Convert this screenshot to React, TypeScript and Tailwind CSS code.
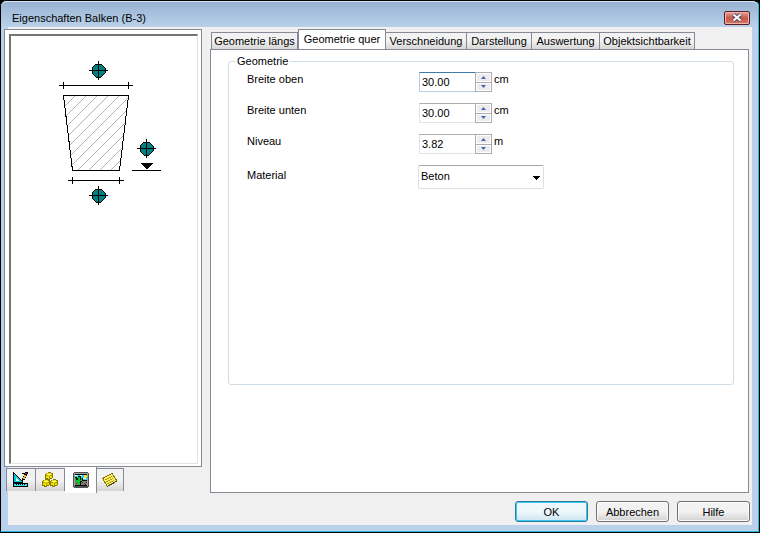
import { useState } from "react";
import clsx from "clsx";

const tabs = [
  { name: "Geometrie längs", width: "w-[87px]" },
  { name: "Geometrie quer", width: "w-[88px]" },
  { name: "Verschneidung", width: "w-[81px]" },
  { name: "Darstellung", width: "w-[65px]" },
  { name: "Auswertung", width: "w-[68px]" },
  { name: "Objektsichtbarkeit", width: "w-[95px]" },
];

const hatchLines = [171, 182, 193, 204, 215, 226, 237, 248, 259, 270, 281];

const Marker = ({ x, y }: { x: number; y: number }) => (
  <g>
    <path
      d={`M${x - 2} ${y - 6}h5l4 4v5l-4 4h-5l-4 -4v-5z`}
      fill="#008080"
      stroke="#000"
    />
    <path d={`M${x - 9} ${y + 0.5}h19M${x + 0.5} ${y - 9}v19`} stroke="#000" />
  </g>
);

const SectionDrawing = () => (
  <svg
    width="186"
    height="200"
    viewBox="11 36 186 200"
    fill="none"
    role="img"
    aria-label="Balkenquerschnitt"
  >
    <clipPath id="beam">
      <path d="M63 95h66l-9 76h-48z" />
    </clipPath>
    <g clipPath="url(#beam)" stroke="#b4b4b4">
      {hatchLines.map((sum) => (
        <path key={sum} d={`M${sum - 90} 90L${sum - 175} 175`} />
      ))}
    </g>
    <g stroke="#000" shapeRendering="crispEdges">
      <path d="M63.5 95.5h65l-9 75h-47z" />
      <path d="M59 85.5h74M63.5 82v7M128.5 82v7" />
      <path d="M68 180.5h56M72.5 177v7M119.5 177v7" />
      <path d="M132 170.5h29" />
      <path d="M140 163h13l-6 6h-1z" fill="#000" stroke="none" />
      <Marker x={98} y={70} />
      <Marker x={146} y={148} />
      <Marker x={98} y={195} />
    </g>
  </svg>
);

const DraftIcon = () => (
  <svg width="16" height="16" viewBox="0 0 16 16" shapeRendering="crispEdges">
    <path d="M0 0h1v1h1v1h1v1h1v1h1v1h1v1h1v1h1v1h1v1h1v2h-10z" fill="#000" />
    <path d="M1 2h1v1h1v1h1v1h1v1h1v1h1v1h1v1h1v1h-8z" fill="#00c8d8" />
    <path d="M3 6h1v1h1v1h1v1h-3z" fill="#fff" />
    <path d="M0 11h15v4h-15z" fill="#000" />
    <path d="M1 12h13v2h-13z" fill="#40e0f0" />
    <path d="M3 12h1v1h-1zM5 12h1v1h-1zM7 12h1v1h-1zM9 12h1v1h-1zM11 12h1v1h-1z" fill="#000" />
    <path d="M12 0h3v2h-1v2h-1v2h-1v2h-2v2h-1v-4h1v-2h1v-2h-2v-1h3z" fill="#000" />
    <path d="M11 3h2v2h-1v2h-2v-2h1z" fill="#e8c020" />
    <path d="M12 1h2v1h-2z" fill="#a02020" />
  </svg>
);

const BlocksIcon = () => {
  const block = "M0 2h1v-1h2v-1h3v1h2v5h-1v1h-2v1h-3v-1h-2z";
  return (
    <svg width="17" height="16" viewBox="0 0 17 16" shapeRendering="crispEdges">
      {["translate(3 0)", "translate(0 7)", "translate(8 7)"].map((pos) => (
        <g key={pos} transform={pos}>
          <path d={block} fill="#8a7c00" />
          <path d="M1 2h1v-1h4v1h1v4h-2v1h-2v-1h-2z" fill="#f0e000" />
          <path d="M1 3h2v1h2v-1h2v1h-2v3h-1v-3h-3z" fill="#a89800" />
          <path d="M2 2h4v1h-4z" fill="#ffff80" />
        </g>
      ))}
    </svg>
  );
};

const SceneIcon = () => (
  <svg width="16" height="16" viewBox="0 0 16 16" shapeRendering="crispEdges">
    <path d="M1 0h14v1h1v14h-1v1h-14v-1h-1v-14h1z" fill="#505050" />
    <path d="M1 1h14v13h-14z" fill="#a0a0a0" />
    <path d="M2 2h12v12h-12z" fill="#000" />
    <path d="M2 3h12v5h-12z" fill="#20d8f0" />
    <path d="M2 3h2v1h-2zM7 3h2v1h-2zM9 6h2v-1h2v2h-4z" fill="#fff" />
    <path d="M11 3h3v2h-1v1h-2z" fill="#ffe820" />
    <path d="M2 9h12v4h-12z" fill="#847c70" />
    <path d="M9 10h1v1h-1zM11 11h1v1h-1zM13 10h1v1h-1zM12 12h1v1h-1zM3 11h1v1h-1z" fill="#403830" />
    <path d="M2 5h2v1h1v-2h3v2h2v3h-1v1h-1v3h-3v-3h-2v-1h-1z" fill="#000" />
    <path d="M2 6h1v2h2v-3h2v3h1v-2h1v3h-2v4h-2v-3h-2v-1h-1z" fill="#00c820" />
  </svg>
);

const NoteIcon = () => (
  <svg width="16" height="15" viewBox="0 0 16 15" shapeRendering="crispEdges">
    <path d="M0.5 5.5L10 0.5L15 8L5.5 13.5z" fill="#fff050" stroke="#807418" />
    <path
      d="M3 6h2v-1h2v-1h2v-1h1M4 8h2v-1h2v-1h2v-1h1M5 10h2v-1h2v-1h2v-1h1M6 12h1v-1h2v-1h2v-1h1"
      fill="none"
      stroke="#a89830"
      strokeDasharray="2 1"
    />
    <path d="M5.5 13.5L15 8" stroke="#484010" />
  </svg>
);

const views = [
  { name: "Zeichnung", icon: <DraftIcon />, width: "w-[30px]" },
  { name: "Bauteile", icon: <BlocksIcon />, width: "w-[29px]" },
  { name: "Ansicht", icon: <SceneIcon />, width: "w-8" },
  { name: "Notizen", icon: <NoteIcon />, width: "w-[27px]" },
];

type NumberRowProps = {
  id: string;
  label: string;
  unit: string;
  start: number;
  focused?: boolean;
};

const NumberRow = ({ id, label, unit, start, focused }: NumberRowProps) => {
  const [value, setValue] = useState(start.toFixed(2));

  const step = (amount: number) => {
    setValue((Number(value) + amount).toFixed(2));
  };

  return (
    <div className="flex items-start">
      <label htmlFor={id} className="w-[172px]">
        {label}
      </label>
      <div
        className={clsx(
          "flex h-5 w-[73px] border",
          focused
            ? "border-[#b5cfe7] border-t-[#3d7bad]"
            : "border-[#e2e3ea] border-t-[#abadb3]"
        )}
      >
        <input
          id={id}
          type="text"
          inputMode="decimal"
          value={value}
          onChange={(e) => setValue(e.target.value)}
          className="w-0 flex-1 bg-white pl-0.5 outline-none"
        />
        <div className="-my-px -mr-px flex w-[17px] flex-col gap-px border border-[#abadb3] bg-[#abadb3]">
          <button
            type="button"
            aria-label={`${label} erhöhen`}
            onClick={() => step(1)}
            className="flex flex-1 items-center justify-center border border-white bg-[#ececec]"
          >
            <svg width="5" height="3" viewBox="0 0 5 3">
              <path d="M2.5 0L5 3H0z" fill="#4a62b8" />
            </svg>
          </button>
          <button
            type="button"
            aria-label={`${label} verringern`}
            onClick={() => step(-1)}
            className="flex flex-1 items-center justify-center border border-white bg-[#ececec]"
          >
            <svg width="5" height="3" viewBox="0 0 5 3">
              <path d="M0 0H5L2.5 3z" fill="#4a62b8" />
            </svg>
          </button>
        </div>
      </div>
      <span className="pl-0.5">{unit}</span>
    </div>
  );
};

const App = () => {
  const [activeTab, setActiveTab] = useState("Geometrie quer");
  const [activeView, setActiveView] = useState("Ansicht");

  return (
    <div className="flex min-h-screen bg-black font-['Liberation_Sans',Arial,sans-serif] text-[11px] leading-[14px] text-black">
      <div className="flex flex-1 flex-col rounded-t-md border border-black border-r-[#28b8dc] border-b-[#28b8dc] bg-[#b9d1ea] mr-px mb-px">
        <header className="flex h-[26px] items-center justify-between rounded-t-md border-t border-[#d4e4f4] bg-linear-to-b from-[#98b3d3] to-[#b9d1ea] pt-1.5 pr-2 pl-[11px]">
          <h1>Eigenschaften Balken (B-3)</h1>
          <button
            type="button"
            aria-label="Schließen"
            className="flex h-[14px] w-[26px] items-center justify-center rounded-[2px] border border-[#5c1c24] bg-linear-to-b from-[#e4a49c] via-[#c8564a] via-50% to-[#d87868] shadow-[inset_0_0_0_1px_#eab8b0]"
          >
            <svg width="12" height="9" viewBox="0 0 12 9">
              <path d="M2.5 1.5L9.5 7.5M9.5 1.5L2.5 7.5" stroke="#484c60" strokeWidth="4" />
              <path d="M2.5 1.5L9.5 7.5M9.5 1.5L2.5 7.5" stroke="#fff" strokeWidth="2" />
            </svg>
          </button>
        </header>

        <main className="mr-1.5 mb-1.5 ml-[7px] flex flex-1 flex-col bg-[#f0f0f0]">
          <div className="flex flex-1">
            <section className="-ml-1 flex w-[198px] flex-col pt-0.5">
              <div className="flex flex-1 border border-[#868a94] bg-white p-1 pr-[3px] pb-[2px]">
                <div className="flex-1 border border-t-2 border-l-2 border-t-[#747474] border-r-[#e3e3e3] border-b-[#e3e3e3] border-l-[#747474] bg-white">
                  <SectionDrawing />
                </div>
              </div>
              <div role="tablist" className="flex h-[26px] items-start pl-0.5">
                {views.map((view) => (
                  <button
                    key={view.name}
                    type="button"
                    role="tab"
                    aria-label={view.name}
                    aria-selected={activeView === view.name}
                    onClick={() => setActiveView(view.name)}
                    className={clsx(
                      "flex items-center justify-center border-[#868a94]",
                      view.width,
                      activeView === view.name
                        ? "h-[26px] border-r bg-white"
                        : "mt-px h-[23px] border-t border-r bg-linear-to-b from-[#f2f2f2] from-50% to-[#d4d4d4] first:border-l"
                    )}
                  >
                    {view.icon}
                  </button>
                ))}
              </div>
            </section>

            <section className="ml-2 flex flex-1 flex-col pt-0.5 pr-[3px]">
              <div role="tablist" className="flex h-5 items-end pl-px">
                {tabs.map((tab) => (
                  <button
                    key={tab.name}
                    type="button"
                    role="tab"
                    aria-selected={activeTab === tab.name}
                    onClick={() => setActiveTab(tab.name)}
                    className={clsx(
                      "border-t border-r border-[#868a94] whitespace-nowrap",
                      tab.width,
                      activeTab === tab.name
                        ? "-mb-px h-[21px] border-l bg-white pb-0.5"
                        : "h-[17px] bg-linear-to-b from-[#f2f2f2] from-50% to-[#d6d6d6] first:border-l"
                    )}
                  >
                    {tab.name}
                  </button>
                ))}
              </div>
              <div
                role="tabpanel"
                className="flex-1 border border-[#868a94] bg-white px-[14px] pt-1 pl-[17px]"
              >
                <fieldset className="min-h-[331px] rounded-[3px] border border-[#d0dce6] px-1.5">
                  <legend className="px-0.5">Geometrie</legend>
                  <div className="flex flex-col gap-[11px] pt-1 pl-3">
                    <NumberRow id="top" label="Breite oben" unit="cm" start={30} focused />
                    <NumberRow id="bottom" label="Breite unten" unit="cm" start={30} />
                    <NumberRow id="level" label="Niveau" unit="m" start={3.82} />
                    <div className="flex items-start">
                      <label htmlFor="material" className="w-[171px] pt-[3px]">
                        Material
                      </label>
                      <div className="relative">
                        <select
                          id="material"
                          className="h-6 w-[126px] appearance-none rounded-[2px] border border-[#dcdfe6] border-t-[#a4a6ac] bg-white pb-0.5 pl-0.5 outline-none"
                        >
                          <option>Beton</option>
                        </select>
                        <svg
                          width="7"
                          height="4"
                          viewBox="0 0 7 4"
                          shapeRendering="crispEdges"
                          className="pointer-events-none absolute top-[11px] right-1"
                        >
                          <path d="M0 0h7v1h-1v1h-1v1h-1v1h-1v-1h-1v-1h-1v-1h-1z" />
                        </svg>
                      </div>
                    </div>
                  </div>
                </fieldset>
              </div>
            </section>
          </div>

          <footer className="flex justify-end gap-2 pt-2 pr-0.5 pb-[3px]">
            <button
              type="button"
              className="h-[21px] w-[73px] rounded-[3px] border border-[#2c7a98] bg-linear-to-b from-[#eef7fb] from-50% to-[#cde6f2] shadow-[inset_0_0_0_1px_#38c8f4]"
            >
              OK
            </button>
            {["Abbrechen", "Hilfe"].map((name) => (
              <button
                key={name}
                type="button"
                className="h-[21px] w-[73px] rounded-[3px] border border-[#707070] bg-linear-to-b from-[#f2f2f2] from-50% to-[#d2d2d2] shadow-[inset_0_0_0_1px_#fbfbfb]"
              >
                {name}
              </button>
            ))}
          </footer>
        </main>
      </div>
    </div>
  );
};

export default App;
